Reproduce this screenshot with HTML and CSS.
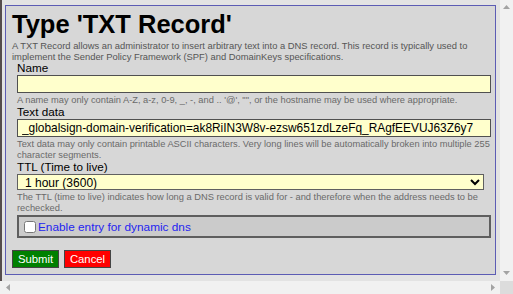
FILE: index.html
```html
<!DOCTYPE html>
<html lang="en">
<head>
<meta charset="utf-8">
<title>Type 'TXT Record'</title>
<link rel="stylesheet" href="styles.css">
</head>
<body>
<div class="viewport">
  <div class="panel">
    <h1 class="title">Type 'TXT Record'</h1>
    <p class="intro">A TXT Record allows an administrator to insert arbitrary text into a DNS record. This record is typically used to implement the Sender Policy Framework (SPF) and DomainKeys specifications.</p>
    <div class="fields">
      <label class="label" for="name">Name</label>
      <input class="field" id="name" type="text" value="">
      <p class="help">A name may only contain A-Z, a-z, 0-9, _, -, and .. '@', "", or the hostname may be used where appropriate.</p>

      <label class="label" for="txt">Text data</label>
      <input class="field" id="txt" type="text" value="_globalsign-domain-verification=ak8RiIN3W8v-ezsw651zdLzeFq_RAgfEEVUJ63Z6y7">
      <p class="help">Text data may only contain printable ASCII characters. Very long lines will be automatically broken into multiple 255 character segments.</p>

      <label class="label" for="ttl">TTL (Time to live)</label>
      <select class="select" id="ttl"><option>1 hour (3600)</option></select>
      <p class="help">The TTL (time to live) indicates how long a DNS record is valid for - and therefore when the address needs to be rechecked.</p>

      <div class="checkrow">
        <input class="check" type="checkbox" id="dyn">
        <label class="checklabel" for="dyn">Enable entry for dynamic dns</label>
      </div>
    </div>
    <div class="actions">
      <button class="btn submit" type="button">Submit</button>
      <button class="btn cancel" type="button">Cancel</button>
    </div>
  </div>
</div>
<div class="vbar">
  <svg class="arrow" width="7" height="4" viewBox="0 0 7 4"><path d="M0 4 L3.5 0 L7 4 Z" fill="#a3a3a3"/></svg>
  <svg class="arrow" width="7" height="4" viewBox="0 0 7 4"><path d="M0 0 L3.5 4 L7 0 Z" fill="#a3a3a3"/></svg>
</div>
<div class="hbar">
  <svg class="arrow" width="4" height="7" viewBox="0 0 4 7"><path d="M4 0 L0 3.5 L4 7 Z" fill="#a3a3a3"/></svg>
  <svg class="arrow" width="4" height="7" viewBox="0 0 4 7"><path d="M0 0 L4 3.5 L0 7 Z" fill="#a3a3a3"/></svg>
</div>
<div class="corner"></div>
</body>
</html>
```
FILE: styles.css
```css
html {
  height: 100%;
  background: #e3e3e3;
}
body {
  margin: 0;
  height: 100%;
  display: grid;
  grid-template-columns: 1fr 13px;
  grid-template-rows: 1fr 13px;
  overflow: hidden;
  font-family: "Liberation Sans", Arial, sans-serif;
  color: #000;
}
.viewport {
  border-left: 2px solid #554c4c;
  padding: 5px 4px 0 3px;
  overflow: hidden;
}
.vbar {
  background: #f1f1f1;
  display: flex;
  flex-direction: column;
  justify-content: space-between;
  align-items: center;
  padding: 5px 0 6px;
}
.hbar {
  background: #f1f1f1;
  display: flex;
  justify-content: space-between;
  align-items: center;
  padding: 0 5px 0 6px;
}
.corner {
  background: #dcdcdc;
}
.arrow {
  display: block;
}
.panel {
  background: #d7d7d7;
  border: 1px solid #5c5cb4;
  padding: 4px 4px 6px 6px;
}
.title {
  margin: 0;
  font-size: 25.5px;
  line-height: 28px;
  font-weight: bold;
}
.intro {
  margin: 2px 0 0;
  font-size: 9.4px;
  line-height: 11px;
  color: #555;
}
.fields {
  margin-left: 5px;
  display: flex;
  flex-direction: column;
  align-items: flex-start;
}
.label {
  font-size: 11.7px;
  line-height: 12px;
}
.field {
  box-sizing: border-box;
  width: 100%;
  height: 18px;
  margin: 1px 0 0;
  padding: 0 4px;
  border: 1px solid #505050;
  background: #ffffcc;
  font-family: "Liberation Sans", Arial, sans-serif;
  font-size: 11.9px;
  color: #000;
  outline: none;
}
.help {
  margin: 2px 0 0;
  font-size: 9.3px;
  line-height: 11px;
  color: #6a6a6a;
}
.select {
  box-sizing: border-box;
  width: 98.6%;
  height: 16px;
  margin: 1px 0 0;
  padding: 0 3px;
  border: 1px solid #606060;
  border-radius: 0;
  background-color: #ffffcc;
  font-family: "Liberation Sans", Arial, sans-serif;
  font-size: 12px;
  color: #000;
}
.checkrow {
  box-sizing: border-box;
  width: 100%;
  height: 23px;
  margin-top: 1px;
  border: 2px solid #5e5e5e;
  background: #cbcbcb;
  display: flex;
  align-items: center;
  padding-left: 5px;
}
.check {
  width: 12px;
  height: 12px;
  margin: 0 2px 0 0;
}
.checklabel {
  font-size: 11.8px;
  color: #2424f0;
}
.actions {
  display: flex;
  gap: 5px;
  margin-top: 12px;
}
.btn {
  box-sizing: border-box;
  width: 47px;
  height: 18px;
  padding: 0;
  border: 1px solid #444;
  font-family: "Liberation Sans", Arial, sans-serif;
  font-size: 11.3px;
  color: #fff;
}
.submit { background: #008000; }
.cancel { background: #ff0000; }
```
